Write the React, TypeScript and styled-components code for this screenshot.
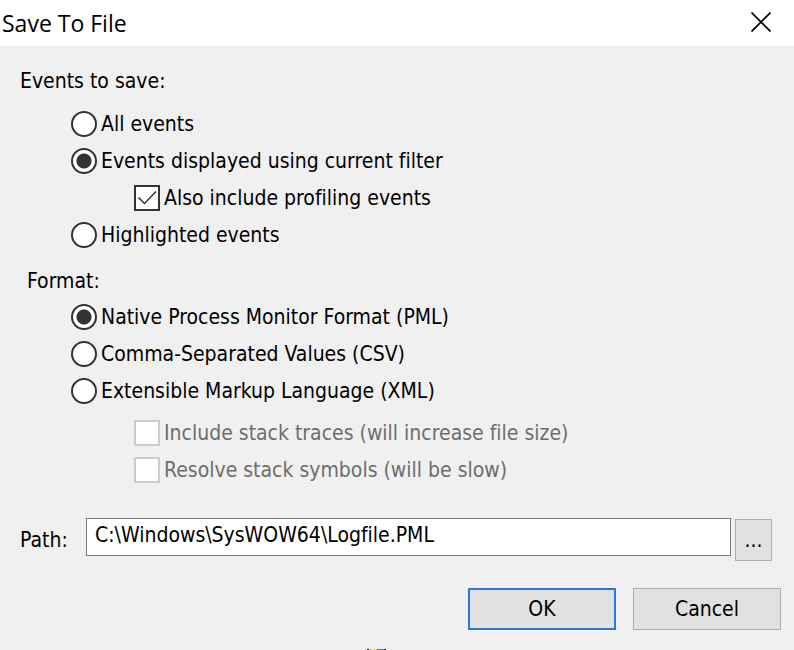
import React, { useState } from "react";
import styled, { createGlobalStyle } from "styled-components";

const GlobalStyle = createGlobalStyle`
  *, *::before, *::after { box-sizing: border-box; }
  body {
    margin: 0;
    background: #f0f0f0;
    color: #000;
    font-family: "DejaVu Sans Condensed", "Noto Sans", sans-serif;
    font-size: 21px;
    line-height: 30px;
    font-variant-ligatures: none;
  }
  button, input { font: inherit; color: inherit; font-variant-ligatures: none; }
`;

const Dialog = styled.form`
  min-height: 100vh;
  display: flex;
  flex-direction: column;
  background: #f0f0f0;
`;

const TitleBar = styled.header`
  display: flex;
  align-items: center;
  justify-content: space-between;
  height: 46px;
  padding: 0 23px 0 2px;
  background: #fff;
`;

const Title = styled.h1`
  margin: 0;
  font-family: "Open Sans", "Noto Sans", sans-serif;
  font-size: 23px;
  font-weight: 400;
`;

const CloseButton = styled.button`
  display: flex;
  padding: 0 0 2px;
  border: 0;
  background: none;
`;

const Group = styled.fieldset<{ $top: number; $indent: number }>`
  margin: 0;
  border: 0;
  min-width: 0;
  padding: ${(p) => p.$top}px 20px 0 ${(p) => p.$indent}px;
`;

const Legend = styled.legend`
  float: left;
  padding: 0;
`;

const Options = styled.div<{ $outdent: number; $gap: number }>`
  clear: both;
  display: flex;
  flex-direction: column;
  gap: 7px;
  padding-top: ${(p) => p.$gap}px;
  padding-left: ${(p) => p.$outdent}px;
`;

const Option = styled.label<{ $nested?: boolean; $disabled?: boolean }>`
  display: flex;
  align-items: center;
  align-self: flex-start;
  gap: 4px;
  margin-left: ${(p) => (p.$nested ? 63 : 0)}px;
  color: ${(p) => (p.$disabled ? "#6d6d6d" : "#000")};
  white-space: nowrap;
`;

const Radio = styled.input.attrs({ type: "radio" })`
  appearance: none;
  width: 26px;
  height: 26px;
  margin: 0;
  border: 2px solid #333;
  border-radius: 50%;
  background: #fff;
  &:checked {
    background: radial-gradient(circle, #333 0 7px, #fff 8px);
  }
`;

const CheckBox = styled.input.attrs({ type: "checkbox" })`
  appearance: none;
  width: 26px;
  height: 26px;
  margin: 0;
  border: 2px solid #333;
  background: #fff;
  &:disabled { border-color: #ccc; }
`;

const CheckWrap = styled.span`
  display: grid;
  & > * { grid-area: 1 / 1; }
  & > svg { pointer-events: none; }
`;

const PathRow = styled.div`
  display: flex;
  padding: 33px 22px 0 20px;
`;

const PathLabel = styled.label`
  width: 66px;
  padding-top: 7px;
`;

const PathInput = styled.input`
  flex: 1;
  min-width: 0;
  height: 38px;
  padding: 0 8px 4px;
  border: 1px solid #7a7a7a;
  background: #fff;
`;

const PushButton = styled.button<{ $primary?: boolean }>`
  width: 148px;
  height: 42px;
  padding: 0;
  border: ${(p) => (p.$primary ? "2px solid #2a78d7" : "1px solid #adadad")};
  background: #e1e1e1;
`;

const BrowseButton = styled(PushButton)`
  width: 37px;
  margin: 1px 0 0 4px;
`;

const Footer = styled.footer`
  display: flex;
  justify-content: flex-end;
  gap: 17px;
  padding: 27px 13px 19px;
`;

const EdgeMark = styled.svg`
  display: block;
  margin: auto 0 0 calc(50% - 30px);
`;

type Choice = { label: string; kind: "radio" | "check"; disabled?: boolean };

const eventChoices: Choice[] = [
  { label: "All events", kind: "radio" },
  { label: "Events displayed using current filter", kind: "radio" },
  { label: "Also include profiling events", kind: "check" },
  { label: "Highlighted events", kind: "radio" },
];

const formatChoices: Choice[] = [
  { label: "Native Process Monitor Format (PML)", kind: "radio" },
  { label: "Comma-Separated Values (CSV)", kind: "radio" },
  { label: "Extensible Markup Language (XML)", kind: "radio" },
];

const stackChoices: Choice[] = [
  { label: "Include stack traces (will increase file size)", kind: "check", disabled: true },
  { label: "Resolve stack symbols (will be slow)", kind: "check", disabled: true },
];

function Check({ initial, disabled }: { initial: boolean; disabled?: boolean }) {
  const [on, setOn] = useState(initial);
  return (
    <CheckWrap>
      <CheckBox checked={on} disabled={disabled} onChange={() => setOn(!on)} />
      {on && (
        <svg width="26" height="26" viewBox="0 0 26 26" fill="none" stroke="#333" strokeWidth="1.5">
          <path d="M4.5 12.5l6 6L22 6.5" />
        </svg>
      )}
    </CheckWrap>
  );
}

function ChoiceList({ name, items, initial }: { name: string; items: Choice[]; initial: string }) {
  return (
    <>
      {items.map((item) => (
        <Option key={item.label} $nested={item.kind === "check"} $disabled={item.disabled}>
          {item.kind === "radio" ? (
            <Radio name={name} defaultChecked={item.label === initial} />
          ) : (
            <Check initial={!item.disabled} disabled={item.disabled} />
          )}
          {item.label}
        </Option>
      ))}
    </>
  );
}

export default function App() {
  return (
    <>
      <GlobalStyle />
      <Dialog onSubmit={(e) => e.preventDefault()}>
        <TitleBar>
          <Title>Save To File</Title>
          <CloseButton type="button" aria-label="Close">
            <svg width="20" height="20" viewBox="0 0 20 20" stroke="#000" strokeWidth="1.7">
              <path d="M.5.5l19 19M19.5.5l-19 19" />
            </svg>
          </CloseButton>
        </TitleBar>
        <Group $top={20} $indent={20}>
          <Legend>Events to save:</Legend>
          <Options $outdent={51} $gap={13}>
            <ChoiceList name="events" items={eventChoices} initial={eventChoices[1].label} />
          </Options>
        </Group>
        <Group $top={16} $indent={27}>
          <Legend>Format:</Legend>
          <Options $outdent={44} $gap={6}>
            <ChoiceList name="format" items={formatChoices} initial={formatChoices[0].label} />
          </Options>
          <Options $outdent={44} $gap={12}>
            <ChoiceList name="stack" items={stackChoices} initial="" />
          </Options>
        </Group>
        <PathRow>
          <PathLabel htmlFor="path">Path:</PathLabel>
          <PathInput id="path" defaultValue="C:\Windows\SysWOW64\Logfile.PML" />
          <BrowseButton type="button" aria-label="Browse">...</BrowseButton>
        </PathRow>
        <Footer>
          <PushButton type="submit" $primary>OK</PushButton>
          <PushButton type="button">Cancel</PushButton>
        </Footer>
        <EdgeMark width="19" height="1" viewBox="0 0 19 1" aria-hidden="true">
          <path d="M0 0h19v1H0z" fill="#111" />
          <path d="M2 0h8v1H2z" fill="#e8e850" />
          <path d="M10 0h7v1h-7z" fill="#687880" />
        </EdgeMark>
      </Dialog>
    </>
  );
}
